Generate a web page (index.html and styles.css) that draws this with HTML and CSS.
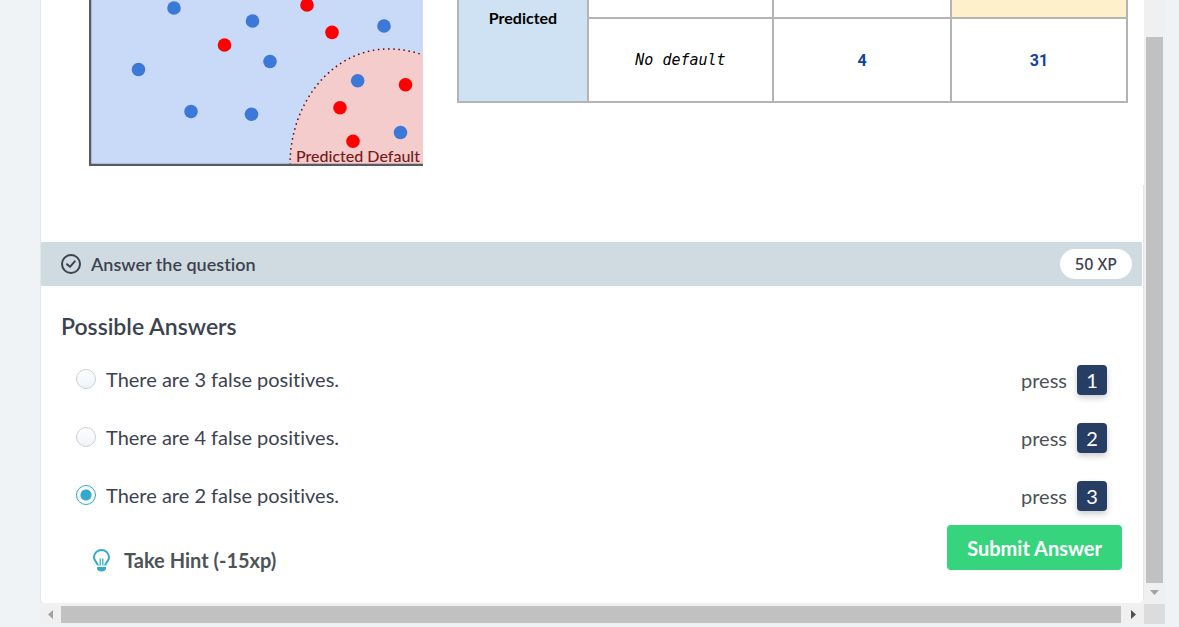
FILE: index.html
```html
<!DOCTYPE html>
<html lang="en">
<head>
<meta charset="utf-8">
<title>Answer the question</title>
<link rel="stylesheet" href="styles.css">
</head>
<body>
<div class="frame">
  <main class="lesson">
    <section class="figures">
      <svg class="chart" viewBox="0 0 334 233" role="img" aria-label="Predicted default chart">
        <rect x="1" y="0" width="333" height="232" fill="#c9daf8"/>
        <path d="M201 232C201 168 245 116 299 116Q318 116 334 122V232Z" fill="#f4cccc"/>
        <path d="M201 232C201 168 245 116 299 116Q318 116 334 122" fill="none" stroke="#660000" stroke-width="1.5" stroke-dasharray="1.5 3.6"/>
        <g fill="#3c78d8">
          <circle cx="85" cy="75" r="6.8"/><circle cx="163.500" cy="88" r="6.8"/>
          <circle cx="181" cy="128.500" r="6.8"/><circle cx="49.500" cy="136.500" r="6.8"/>
          <circle cx="102" cy="178.500" r="6.8"/><circle cx="162.500" cy="181.200" r="6.8"/>
          <circle cx="295" cy="93" r="6.8"/><circle cx="268.700" cy="147.700" r="6.8"/>
          <circle cx="311.500" cy="199.500" r="6.8"/>
        </g>
        <g fill="#ff0000">
          <circle cx="135.500" cy="112" r="6.8"/><circle cx="218" cy="72" r="6.8"/>
          <circle cx="243" cy="99.400" r="6.8"/><circle cx="316.500" cy="151.800" r="6.8"/>
          <circle cx="251" cy="174.800" r="6.8"/><circle cx="264" cy="208.200" r="6.8"/>
        </g>
        <path d="M1 0V232H334" fill="none" stroke="#595b60" stroke-width="2.5"/>
        <text class="chart-label" x="207" y="229">Predicted Default</text>
      </svg>
      <table class="matrix">
        <colgroup><col class="col-axis"><col class="col-class"><col class="col-value"><col></colgroup>
        <tbody>
          <tr><th rowspan="2" scope="rowgroup">Predicted</th><td></td><td></td><td class="marked"></td></tr>
          <tr><td class="class-name">No default</td><td class="count">4</td><td class="count">31</td></tr>
        </tbody>
      </table>
    </section>
    <section class="exercise">
      <header class="task-bar">
        <svg class="check" viewBox="0 0 20 20" aria-hidden="true"><circle cx="10" cy="10" r="9" fill="none" stroke="currentColor" stroke-width="2"/><path d="M6 10.200L9 12.800L13.800 7.300" fill="none" stroke="currentColor" stroke-width="2" stroke-linecap="round" stroke-linejoin="round"/></svg>
        <h1>Answer the question</h1>
        <span class="xp">50 XP</span>
      </header>
      <form class="answers">
        <h2>Possible Answers</h2>
        <div class="option"><input type="radio" name="answer" id="a1"><label for="a1">There are 3 false positives.</label><span class="press">press</span><kbd>1</kbd></div>
        <div class="option"><input type="radio" name="answer" id="a2"><label for="a2">There are 4 false positives.</label><span class="press">press</span><kbd>2</kbd></div>
        <div class="option"><input type="radio" name="answer" id="a3" checked><label for="a3">There are 2 false positives.</label><span class="press">press</span><kbd>3</kbd></div>
        <div class="actions">
          <button type="button" class="hint">
            <svg viewBox="0 0 17 23" aria-hidden="true"><path d="M4.800 16.500C4.500 13.500 1 12.300 1 8.200A7.500 7.200 0 0 1 16 8.200C16 12.300 12.500 13.500 12.200 16.500" fill="none" stroke="#33aacc" stroke-width="2"/><path d="M7.200 16.500V9.500M9.800 16.500V9.500" fill="none" stroke="#33aacc" stroke-width="1.300"/><path d="M4 18H13V19.500Q12.500 22.500 8.500 22.500T4 19.500Z" fill="#33aacc"/></svg>
            Take Hint (-15xp)
          </button>
          <button type="button" class="submit">Submit Answer</button>
        </div>
      </form>
    </section>
  </main>
  <div class="scroll-y" aria-hidden="true"><span class="thumb"></span><svg viewBox="0 0 21 21"><path d="M6 7H15L10.500 12Z" fill="#a3a3a3"/></svg></div>
  <div class="scroll-x" aria-hidden="true"><svg viewBox="0 0 21 17"><path d="M13 4V13L8 8.500Z" fill="#a3a3a3"/></svg><span class="thumb"></span><svg viewBox="0 0 21 17"><path d="M10 4V13L15 8.500Z" fill="#505050"/></svg></div>
  <div class="corner" aria-hidden="true"></div>
</div>
</body>
</html>
```
FILE: styles.css
```css
* { box-sizing: border-box; }
html { overflow: hidden; }
body {
  margin: 0;
  min-height: 100vh;
  display: flex;
  flex-direction: column;
  background: #eff3f5;
  color: #3d4251;
  font-family: Lato, "Open Sans", sans-serif;
  font-size: 20px;
  font-variant-ligatures: none;
}
h1, h2 { margin: 0; font-weight: 600; }
.frame {
  display: grid;
  grid-template-columns: minmax(0, 1fr) 21px;
  grid-template-rows: auto 20px;
  margin: 0 14px 3px 40px;
  background: #f0f0f0;
}
.lesson {
  display: flex;
  flex-direction: column;
  background: #fff;
  border-left: 1px solid #e3e6ea;
  border-bottom: 1px solid #f0f0f0;
  border-radius: 0 0 5px 5px;
}
.figures {
  display: flex;
  align-items: flex-start;
  gap: 34px;
  margin-top: -67px;
  padding: 0 16px 19px 48px;
}
.chart { flex: none; width: 334px; height: 233px; }
.chart-label { font-size: 16px; font-weight: 500; fill: #741b1b; }
.matrix {
  flex: 1;
  table-layout: fixed;
  width: 100%;
  border-collapse: collapse;
  font-size: 16px;
  color: #000;
  text-align: center;
}
.matrix tr { height: 84px; }
.matrix th, .matrix td { padding: 0; border: 2px solid #b4b4b4; }
.matrix th { padding-bottom: 2px; background: #cfe2f3; }
.col-axis { width: 130px; }
.col-class { width: 185px; }
.col-value { width: 178px; }
.matrix .marked { background: #fff0cc; }
.matrix .class-name { font-family: "DejaVu Sans Mono", monospace; font-size: 15px; font-style: italic; }
.matrix .count { font-family: Roboto, sans-serif; font-weight: 700; color: #1142a0; }
.exercise {
  padding: 57px 1px 0 0;
  border-right: 1px solid #e3e6ea;
  border-radius: 0 0 5px 0;
}
.task-bar {
  display: flex;
  align-items: center;
  gap: 10px;
  height: 44px;
  padding: 0 10px 0 20px;
  background: #cfdbe0;
}
.task-bar h1 { font-size: 18px; line-height: 24px; }
.check { width: 20px; height: 20px; }
.xp {
  margin-left: auto;
  padding: 0 15px;
  border-radius: 15px;
  background: #fff;
  font-family: "Noto Sans", sans-serif;
  font-size: 16px;
  font-weight: 500;
  line-height: 30px;
}
.answers { padding: 28px 20px 30px; }
.answers h2 { margin-bottom: 13px; font-size: 23px; line-height: 24px; }
.option {
  display: flex;
  align-items: center;
  height: 58px;
  padding: 0 15px;
}
.option input {
  appearance: none;
  width: 20px;
  height: 20px;
  margin: 0 10px 2px 0;
  border: 1px solid #cdd0d6;
  border-radius: 50%;
  background: linear-gradient(#fdfefe, #eef4f8);
}
.option input:checked {
  border-color: #33aacc;
  background: radial-gradient(circle, #33aacc 5px, #f7fbfd 6px);
}
.option label { flex: 1; padding-bottom: 2px; }
.press { margin-right: 10px; color: #4d5356; }
kbd {
  width: 30px;
  border-radius: 4px;
  background: #263e63;
  box-shadow: 0 3px 6px rgb(0 0 0 / 20%);
  color: #fff;
  font-family: inherit;
  font-size: 20px;
  line-height: 30px;
  text-align: center;
}
.actions { display: flex; align-items: flex-start; justify-content: space-between; }
button { border: 0; font-family: inherit; font-size: 20px; font-weight: 700; font-variant-ligatures: none; }
.hint {
  display: flex;
  align-items: center;
  gap: 14px;
  margin: 22px 0 0 32px;
  padding: 0;
  background: none;
  color: #4d5356;
  line-height: 26px;
}
.hint svg { width: 17px; height: 23px; }
.submit {
  padding: 1px 20px 0;
  border-radius: 4px;
  background: #36d57d;
  color: #fff;
  line-height: 44px;
}
.scroll-y { display: flex; flex-direction: column; align-items: center; padding-top: 37px; }
.scroll-y .thumb { flex: 1; width: 17px; background: #c1c1c1; }
.scroll-y svg { width: 21px; height: 21px; }
.scroll-x { display: flex; align-items: center; padding-right: 2px; }
.scroll-x .thumb { flex: 1; height: 17px; background: #c1c1c1; }
.scroll-x svg { width: 21px; height: 17px; }
.corner { background: #dcdcdc; }
```
